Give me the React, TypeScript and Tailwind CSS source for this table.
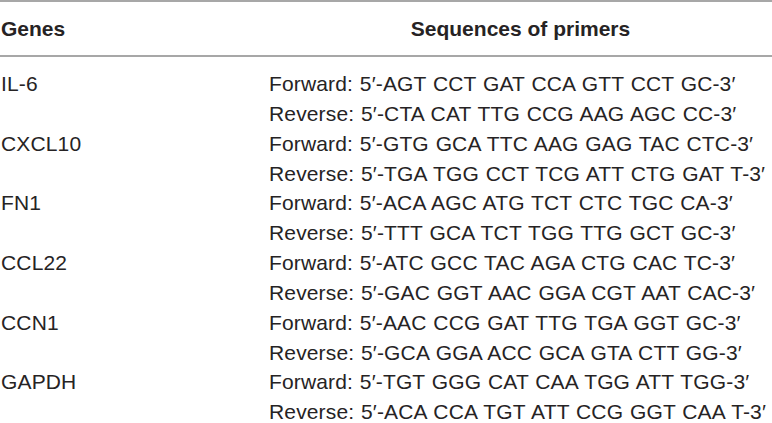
const rows = [
  { gene: 'IL-6', fwd: "5′-AGT CCT GAT CCA GTT CCT GC-3′", rev: "5′-CTA CAT TTG CCG AAG AGC CC-3′" },
  { gene: 'CXCL10', fwd: "5′-GTG GCA TTC AAG GAG TAC CTC-3′", rev: "5′-TGA TGG CCT TCG ATT CTG GAT T-3′" },
  { gene: 'FN1', fwd: "5′-ACA AGC ATG TCT CTC TGC CA-3′", rev: "5′-TTT GCA TCT TGG TTG GCT GC-3′" },
  { gene: 'CCL22', fwd: "5′-ATC GCC TAC AGA CTG CAC TC-3′", rev: "5′-GAC GGT AAC GGA CGT AAT CAC-3′" },
  { gene: 'CCN1', fwd: "5′-AAC CCG GAT TTG TGA GGT GC-3′", rev: "5′-GCA GGA ACC GCA GTA CTT GG-3′" },
  { gene: 'GAPDH', fwd: "5′-TGT GGG CAT CAA TGG ATT TGG-3′", rev: "5′-ACA CCA TGT ATT CCG GGT CAA T-3′" },
];

export default function App() {
  return (
    <div className="w-[772px] h-[423px] overflow-hidden bg-white text-[#262324] font-['Liberation_Sans',Arial,sans-serif]">
      {/* header */}
      <div className="border-t-2 border-b-2 border-[#a7a7a7] h-[57px] grid grid-cols-[269px_1fr] items-center text-[21px] font-bold">
        <div className="pl-[1px]">Genes</div>
        <div className="text-center">Sequences of primers</div>
      </div>

      {/* body */}
      <div className="pt-[12px] text-[21px] tracking-[0.15px] [word-spacing:0.8px]">
        {rows.map((r) => (
          <div key={r.gene} className="grid grid-cols-[269px_1fr]">
            <div className="h-[29.85px] leading-[29.85px] pl-[1px]">{r.gene}</div>
            <div className="h-[29.85px] leading-[29.85px] whitespace-nowrap">Forward: {r.fwd}</div>
            <div className="h-[29.85px]"></div>
            <div className="h-[29.85px] leading-[29.85px] whitespace-nowrap">Reverse: {r.rev}</div>
          </div>
        ))}
      </div>
    </div>
  );
}
